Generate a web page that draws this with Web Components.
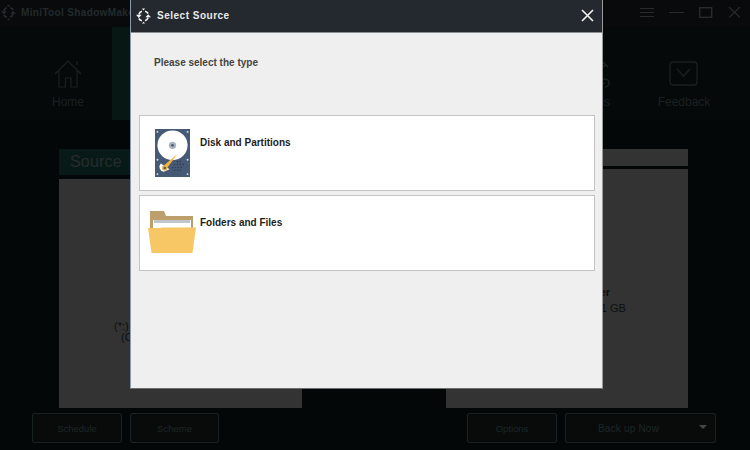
<!DOCTYPE html>
<html>
<head>
<meta charset="utf-8">
<title>MiniTool ShadowMaker</title>
<style>
  html, body { margin: 0; padding: 0; background: #040708; }
  body { width: 750px; height: 450px; overflow: hidden; font-family: "Liberation Sans", Arial, sans-serif; }
</style>
</head>
<body>
<backup-app>
  <select-dialog slot="dialog">
    <source-option label="Disk and Partitions" kind="disk"></source-option>
    <source-option label="Folders and Files" kind="folder"></source-option>
  </select-dialog>
</backup-app>

<script>
const LOGO = `
  <svg viewBox="0 0 24 24" width="100%" height="100%" fill="none" stroke="currentColor" stroke-width="2.6">
    <path d="M9.500 4.500 A8 8 0 0 0 4.500 9.500"/><path d="M19.500 14.500 A8 8 0 0 1 14.500 19.500"/>
    <path d="M14.500 4.500 A8 8 0 0 1 19.500 8"/><path d="M4.500 16 A8 8 0 0 0 9.500 19.500"/>
    <path fill="currentColor" stroke="none" d="M9.500 0 h5 l-2.500 3z M9.500 24 h5 l-2.500 -3z M0 10 h9 l-4.500 5z M15 14 h9 l-4.500 -5z"/>
  </svg>`;

class NavTab extends HTMLElement {
  constructor() {
    super();
    this.attachShadow({ mode: 'open' });
    this.shadowRoot.innerHTML = `
      <style>
        :host {
          display: flex;
          flex-direction: column;
          align-items: center;
          width: 88px;
          height: 93px;
          box-sizing: border-box;
          padding-top: 32px;
          color: #1a2121;
          font-size: 12px;
        }
        :host([active]) { background: #061714; }
        .icon { width: 30px; height: 30px; margin-bottom: 6px; }
        .label { line-height: 14px; white-space: nowrap; }
      </style>
      <div class="icon"><slot></slot></div>
      <div class="label">${this.getAttribute('label') || ''}</div>
    `;
  }
}
customElements.define('nav-tab', NavTab);

class FooterButton extends HTMLElement {
  constructor() {
    super();
    this.attachShadow({ mode: 'open' });
    this.shadowRoot.innerHTML = `
      <style>
        :host {
          display: flex;
          align-items: center;
          justify-content: center;
          position: relative;
          box-sizing: border-box;
          height: 30px;
          width: 90px;
          border: 1px solid #1a2122;
          border-radius: 2px;
          background: #090b0b;
          color: #1c2727;
          font-size: 9.500px;
        }
        :host([wide]) { width: 151px; padding-right: 24px; font-size: 10px; letter-spacing: .2px; }
        .caret {
          position: absolute;
          right: 8px;
          top: 11px;
          border: 4px solid transparent;
          border-top: 4px solid #444848;
        }
      </style>
      <slot></slot>
      ${this.hasAttribute('wide') ? '<span class="caret"></span>' : ''}
    `;
  }
}
customElements.define('footer-button', FooterButton);

class BackupPanel extends HTMLElement {
  constructor() {
    super();
    this.attachShadow({ mode: 'open' });
    this.shadowRoot.innerHTML = `
      <style>
        :host {
          display: flex;
          flex-direction: column;
          width: 243px;
          height: 259px;
        }
        .head {
          flex: none;
          height: 26px;
          margin-bottom: 4px;
          padding-left: 11px;
          box-sizing: border-box;
          background: #071a17;
          color: #272c2b;
          font-size: 16px;
          line-height: 26px;
          letter-spacing: .2px;
        }
        :host([plain]) { width: 242px; }
        :host([plain]) .head { height: 17px; margin-bottom: 3px; background: #333333; }
        .body {
          flex: 1;
          background: #333333;
          color: #0d0f0f;
          font-size: 11px;
          line-height: 12px;
          position: relative;
        }
        ::slotted(*) { position: absolute; white-space: nowrap; }
      </style>
      <div class="head">${this.getAttribute('title') || ''}</div>
      <div class="body"><slot></slot></div>
    `;
  }
}
customElements.define('backup-panel', BackupPanel);

class SourceOption extends HTMLElement {
  constructor() {
    super();
    this.attachShadow({ mode: 'open' });
    const disk = `
      <svg class="art" viewBox="0 0 36 50" width="35" height="48" style="margin-left:15px;margin-top:13px" preserveAspectRatio="none">
        <rect x="0" y="0" width="36" height="50" fill="#475a75"/>
        <g fill="#d9dee5">
          <circle cx="2.500" cy="3" r="1"/><circle cx="33.500" cy="3" r="1"/>
          <circle cx="2.500" cy="47" r="1"/><circle cx="33.500" cy="47" r="1"/>
          <circle cx="2.500" cy="32" r="1"/><circle cx="33.500" cy="32" r="1"/>
        </g>
        <circle cx="18" cy="17" r="15.500" fill="#fff"/>
        <circle cx="18" cy="17" r="3.800" fill="#a9b2bf"/>
        <circle cx="18" cy="17" r="1.400" fill="#475a75"/>
        <g fill="#2f3d52">
          <circle cx="23" cy="34" r=".8"/><circle cx="26" cy="34" r=".8"/>
          <circle cx="20" cy="37" r=".8"/><circle cx="23" cy="37" r=".8"/><circle cx="26" cy="37" r=".8"/><circle cx="29" cy="37" r=".8"/>
          <circle cx="18" cy="40" r=".8"/><circle cx="21" cy="40" r=".8"/><circle cx="24" cy="40" r=".8"/><circle cx="27" cy="40" r=".8"/>
          <circle cx="20" cy="43" r=".8"/><circle cx="23" cy="43" r=".8"/><circle cx="26" cy="43" r=".8"/>
        </g>
        <path d="M6 36 a5 5 0 0 0 3 8.500 l6 -2.500z" fill="#fff"/>
        <path d="M23 26 L11.500 42 L8.500 38.500z" fill="#f3b23f"/>
        <circle cx="10" cy="40.500" r="2.800" fill="#f3b23f"/>
        <circle cx="10" cy="40.500" r="1.300" fill="#475a75"/>
      </svg>`;
    const folder = `
      <svg class="art" viewBox="0 0 48 42" width="48" height="42" style="margin-left:8px;margin-top:15px">
        <path d="M2 0 H16 L18 5 H45 V20 H2z" fill="#bd9f6c"/>
        <rect x="5" y="9" width="38" height="9" fill="#fff"/>
        <rect x="6" y="9" width="36" height="3" fill="#c2c5c9"/>
        <path d="M0 17 L12 17 L14 16.500 H48 L44.500 42 H3.500z" fill="#f8c765"/>
      </svg>`;
    this.shadowRoot.innerHTML = `
      <style>
        :host {
          display: flex;
          box-sizing: border-box;
          height: 76px;
          background: #fff;
          border: 1px solid #c4c4c4;
        }
        .wrap { position: relative; display: flex; flex: 1; align-items: flex-start; }
        .art { flex: none; display: block; }
        .label {
          position: absolute;
          left: 60px;
          top: 21px;
          font-size: 10px;
          line-height: 12px;
          font-weight: bold;
          color: #1d1d1d;
        }
      </style>
      <div class="wrap">
        ${this.getAttribute('kind') === 'disk' ? disk : folder}
        <div class="label">${this.getAttribute('label')}</div>
      </div>
    `;
  }
}
customElements.define('source-option', SourceOption);

class SelectDialog extends HTMLElement {
  constructor() {
    super();
    this.attachShadow({ mode: 'open' });
    this.shadowRoot.innerHTML = `
      <style>
        :host {
          position: absolute;
          left: 130px;
          top: 0;
          width: 473px;
          height: 389px;
          box-sizing: border-box;
          display: flex;
          flex-direction: column;
          background: #efefef;
          border-left: 1px solid #8c9aab;
          border-right: 1px solid #9b9b9b;
          border-bottom: 1px solid #6e6e6e;
        }
        .bar {
          display: flex;
          align-items: center;
          box-sizing: border-box;
          height: 33px;
          padding-bottom: 1px;
          flex: none;
          background: #24292f;
          border-bottom: 1px solid #8a8f94;
          color: #e9e9e9;
        }
        .logo { width: 15px; height: 16px; margin-left: 5px; margin-right: 6px; color: #f2f2f2; }
        .title { font-size: 10px; font-weight: bold; letter-spacing: .5px; flex: 1; }
        .close { width: 13px; height: 13px; margin-right: 8px; }
        .prompt {
          margin: 24px 0 0 23px;
          font-size: 10px;
          line-height: 12px;
          font-weight: bold;
          color: #46443e;
        }
        .list {
          display: flex;
          flex-direction: column;
          gap: 4px;
          margin: 46px 7px 0 8px;
        }
      </style>
      <div class="bar">
        <div class="logo">${LOGO}</div>
        <div class="title">Select Source</div>
        <svg class="close" viewBox="0 0 13 13" stroke="#f2f2f2" stroke-width="1.600"><path d="M1 1 12 12 M12 1 1 12"/></svg>
      </div>
      <div class="prompt">Please select the type</div>
      <div class="list"><slot></slot></div>
    `;
  }
}
customElements.define('select-dialog', SelectDialog);

class BackupApp extends HTMLElement {
  constructor() {
    super();
    this.attachShadow({ mode: 'open' });
    this.shadowRoot.innerHTML = `
      <style>
        :host {
          display: flex;
          flex-direction: column;
          position: relative;
          width: 750px;
          height: 450px;
          overflow: hidden;
          background: #040708;
          color: #1a2121;
        }
        .top {
          display: flex;
          align-items: center;
          box-sizing: border-box;
          height: 27px;
          padding-bottom: 3px;
          flex: none;
          background: #080a0b;
          font-size: 10px;
          font-weight: bold;
          letter-spacing: .35px;
          color: #232a2b;
        }
        .top .logo { width: 15px; height: 15px; margin: 0 5px 0 1px; color: #262c2d; }
        .winbtns {
          position: absolute;
          top: 7px;
          left: 640px;
          display: flex;
          align-items: center;
          gap: 15px;
        }
        .nav {
          display: flex;
          height: 93px;
          flex: none;
          padding-left: 24px;
          background: #060909;
        }
        .nav .gap { flex: none; width: 352px; }
        .panels {
          display: flex;
          justify-content: space-between;
          padding: 29px 62px 0 59px;
          flex: none;
        }
        .foot {
          display: flex;
          margin-top: 5px;
          padding: 0 34px 0 32px;
          gap: 8px;
        }
        .spacer { flex: 1; }
      </style>
      <div class="top">
        <div class="logo">${LOGO}</div>
        <span>MiniTool ShadowMaker</span>
      </div>
      <div class="winbtns">
        <svg width="14" height="11" stroke="#262b2c" stroke-width="1"><path d="M0 1.500H14M0 5.500H14M0 9.500H14"/></svg>
        <svg width="15" height="11" stroke="#262b2c" stroke-width="1"><path d="M0 5.500H15"/></svg>
        <svg width="14" height="11" fill="none" stroke="#262b2c" stroke-width="1.400"><rect x=".7" y=".7" width="12" height="9.600"/></svg>
        <svg width="13" height="11" stroke="#262b2c" stroke-width="1.200"><path d="M1 0 12 10.500M12 0 1 10.500"/></svg>
      </div>
      <div class="nav">
        <nav-tab label="Home">
          <svg viewBox="0 0 30 30" width="30" height="30" fill="none" stroke="#1a2121" stroke-width="1.200"><path d="M2 15 15 2 28 15M6 12V28H12.500V19H18V28H24V12M24 6V2"/></svg>
        </nav-tab>
        <nav-tab active label="Backup"></nav-tab>
        <div class="gap"></div>
        <nav-tab label="Tools">
          <svg viewBox="0 0 30 30" width="30" height="30" fill="none" stroke="#1a2121" stroke-width="1.600"><path d="M5 6 23 25M24 28a4 4 0 1 0 -4 -4M25 5 6 24M22 3l5 5"/></svg>
        </nav-tab>
        <nav-tab label="Feedback">
          <svg viewBox="0 0 30 30" width="30" height="30" fill="none" stroke="#1a2121" stroke-width="1.300"><rect x="1" y="3" width="27" height="23" rx="3"/><path d="M8 10 14.500 17 21 10"/></svg>
        </nav-tab>
      </div>
      <div class="panels">
        <backup-panel title="Source">
          <span style="left:55px;top:141px">(*:) System</span>
          <span style="left:62px;top:152px">(C:)</span>
        </backup-panel>
        <backup-panel plain>
          <span style="left:112px;top:117px;font-weight:bold">Computer</span>
          <span style="left:126px;top:133px">Free: 1 GB</span>
        </backup-panel>
      </div>
      <div class="foot">
        <footer-button>Schedule</footer-button>
        <footer-button style="width:89px">Scheme</footer-button>
        <div class="spacer"></div>
        <footer-button>Options</footer-button>
        <footer-button wide>Back up Now</footer-button>
      </div>
      <slot name="dialog"></slot>
    `;
  }
}
customElements.define('backup-app', BackupApp);
</script>
</body>
</html>
